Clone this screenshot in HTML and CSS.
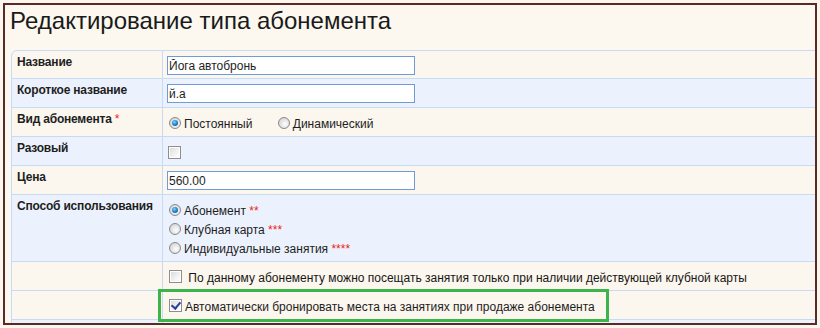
FILE: index.html
```html
<!DOCTYPE html>
<html lang="ru">

<head>
    <meta charset="UTF-8">
    <title>Редактирование типа абонемента</title>
    <link rel="stylesheet" href="styles.css">
</head>

<body>
    <div class="frame">
        <h1 class="title">Редактирование типа абонемента</h1>

        <table class="form">
            <tr class="cream">
                <th>Название</th>
                <td class="field"><input class="text" type="text" value="Йога автобронь"></td>
            </tr>
            <tr class="blue">
                <th>Короткое название</th>
                <td class="field"><input class="text" type="text" value="й.а"></td>
            </tr>
            <tr class="cream">
                <th>Вид абонемента <span class="req">*</span></th>
                <td class="opts">
                    <label class="opt"><input type="radio" name="kind" checked>Постоянный</label>
                    <label class="opt gap"><input type="radio" name="kind">Динамический</label>
                </td>
            </tr>
            <tr class="blue">
                <th>Разовый</th>
                <td class="check"><input type="checkbox"></td>
            </tr>
            <tr class="cream">
                <th>Цена</th>
                <td class="field"><input class="text" type="text" value="560.00"></td>
            </tr>
            <tr class="blue">
                <th>Способ использования</th>
                <td class="opts list">
                    <label class="opt line"><input type="radio" name="use" checked>Абонемент <span class="req">**</span></label>
                    <label class="opt line"><input type="radio" name="use">Клубная карта <span class="req">***</span></label>
                    <label class="opt line"><input type="radio" name="use">Индивидуальные занятия <span class="req">****</span></label>
                </td>
            </tr>
            <tr class="cream">
                <th></th>
                <td class="opts"><label class="opt dark"><input type="checkbox"> По данному абонементу можно посещать занятия только при наличии действующей клубной карты</label></td>
            </tr>
            <tr class="cream">
                <th></th>
                <td class="opts"><label class="opt marked"><input type="checkbox" checked>Автоматически бронировать места на занятиях при продаже абонемента</label></td>
            </tr>
            <tr class="blue">
                <th></th>
                <td></td>
            </tr>
        </table>
    </div>
</body>

</html>
```

FILE: styles.css
```css
* {
    margin: 0;
    padding: 0;
    box-sizing: border-box;
}

body {
    background: #fbf6ee;
    font-family: "Liberation Sans", Arial, sans-serif;
    color: #1e1e1e;
}

.frame {
    margin: 3px;
    height: 322px;
    border: 2px solid #5a2b25;
    background: #fcf7ef;
    overflow: hidden;
}

.title {
    font-size: 24px;
    font-weight: normal;
    line-height: 28px;
    padding: 2px 0 0 5px;
    color: #1a1a1a;
    height: 45px;
}

.form {
    margin-left: 6px;
    width: 812px;
    border-collapse: separate;
    border-spacing: 0;
    font-size: 12px;
}

.form th,
.form td {
    height: 29px;
    vertical-align: top;
    border-bottom: 1px solid #c7dbf6;
    text-align: left;
}

.form tr:first-child th,
.form tr:first-child td {
    border-top: 1px solid #c7dbf6;
}

.form tr:first-child th {
    border-top-left-radius: 6px;
}

.form th {
    width: 152px;
    padding: 4px 5px;
    line-height: 15px;
    font-weight: bold;
    letter-spacing: -0.2px;
    white-space: nowrap;
    border-left: 1px solid #c7dbf6;
    border-right: 1px solid #c7dbf6;
}

.cream th,
.cream td {
    background: #fbf6ee;
}

.blue th,
.blue td {
    background: #ecf2fd;
}

.req {
    color: #ee2222;
    font-weight: normal;
    letter-spacing: 0;
}

.field {
    padding: 5px 4px 0;
}

.text {
    display: block;
    width: 248px;
    height: 19px;
    border: 1px solid #6f9cd9;
    background: #fff;
    font: 12px "Liberation Sans", Arial, sans-serif;
    color: #1e1e1e;
    padding: 0 1px;
    outline: none;
}

.check {
    padding: 9px 5px 0;
}

.opts {
    padding: 7px 5px 0;
    font-size: 12px;
    line-height: 19px;
}

.opts.list {
    padding-bottom: 2px;
}

.opt {
    display: inline-block;
    white-space: nowrap;
}

.opt.gap {
    margin-left: 21px;
}

.opt.line {
    display: block;
}

.opt.dark {
    color: #171717;
}

.opt.marked {
    position: relative;
}

.opt.marked::after {
    content: "";
    position: absolute;
    left: -10px;
    right: -14px;
    top: -9px;
    bottom: -5px;
    border: 3px solid #3cb44b;
}

input[type="radio"],
input[type="checkbox"] {
    -webkit-appearance: none;
    appearance: none;
    display: inline-block;
    vertical-align: -1px;
    margin: 0 3px 0 1px;
    position: relative;
}

input[type="radio"] {
    width: 12px;
    height: 12px;
    border-radius: 50%;
    border: 1px solid #8a8a8a;
    background: radial-gradient(circle at 60% 60%, #ffffff 0, #e6e6e6 45%, #c9c9c9 100%);
}

input[type="radio"]:checked::after {
    content: "";
    position: absolute;
    left: 2px;
    top: 2px;
    width: 6px;
    height: 6px;
    border-radius: 50%;
    background: radial-gradient(circle at 40% 35%, #7fd0ff 0, #1b7ec8 55%, #0a3f7a 100%);
}

input[type="checkbox"] {
    width: 13px;
    height: 13px;
    border: 1px solid #8e8e8e;
    background: linear-gradient(135deg, #d8d8d8 0, #f3f3f3 60%, #ffffff 100%);
    box-shadow: inset 0 0 0 1px #fdfdfd;
}

.check input[type="checkbox"] {
    margin: 0;
    vertical-align: top;
}

input[type="checkbox"]:checked::after {
    content: "";
    position: absolute;
    left: 3px;
    top: 0;
    width: 4px;
    height: 7px;
    border-right: 2px solid #2a3f9c;
    border-bottom: 2px solid #2a3f9c;
    transform: rotate(40deg);
}
```
